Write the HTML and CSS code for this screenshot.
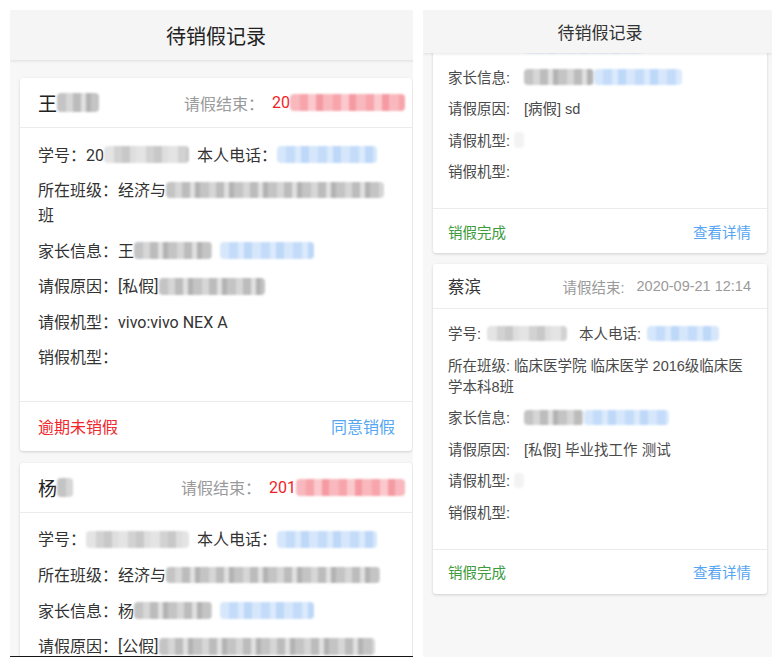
FILE: index.html
```html
<!DOCTYPE html>
<html lang="zh">
<head>
<meta charset="utf-8">
<title>待销假记录</title>
<link rel="stylesheet" href="styles.css">
</head>
<body>
<div class="stage">
  <section class="phone phone-lg">
    <div class="screen screen-lg">
      <header class="bar bar-lg">待销假记录</header>
      <div class="feed feed-lg">
        <article class="card card-lg">
          <div class="card-head">
            <span class="name">王<span class="mask gray w42"></span></span>
            <span class="end"><span class="end-label">请假结束：</span><span class="end-date">20<span class="mask pink w115"></span></span></span>
          </div>
          <div class="card-body">
            <p class="row">学号：20<span class="mask light w85 gap8"></span>本人电话：<span class="mask blue w100"></span></p>
            <p class="row">所在班级：经济与<span class="mask gray w218"></span>班</p>
            <p class="row">家长信息：王<span class="mask gray w78 gap8"></span><span class="mask blue w94"></span></p>
            <p class="row">请假原因：[私假]<span class="mask gray w106"></span></p>
            <p class="row">请假机型：vivo:vivo NEX A</p>
            <p class="row">销假机型：</p>
          </div>
          <div class="card-foot">
            <span class="status overdue">逾期未销假</span>
            <span class="action">同意销假</span>
          </div>
        </article>
        <article class="card card-lg">
          <div class="card-head">
            <span class="name">杨<span class="mask gray w16"></span></span>
            <span class="end"><span class="end-label">请假结束：</span><span class="end-date">201<span class="mask pink w109"></span></span></span>
          </div>
          <div class="card-body">
            <p class="row">学号：<span class="mask light w103 gap8"></span>本人电话：<span class="mask blue w100"></span></p>
            <p class="row">所在班级：经济与<span class="mask gray w214"></span></p>
            <p class="row">家长信息：杨<span class="mask gray w78 gap8"></span><span class="mask blue w94"></span></p>
            <p class="row">请假原因：[公假]<span class="mask gray w216"></span></p>
            <p class="row">请假机型：</p>
            <p class="row">销假机型：</p>
          </div>
        </article>
      </div>
    </div>
  </section>

  <section class="phone phone-sm">
    <div class="screen screen-sm">
      <header class="bar bar-sm">待销假记录</header>
      <div class="feed feed-sm">
        <article class="card card-sm">
          <div class="card-head">
            <span class="name">张<span class="mask gray w16"></span></span>
            <span class="end"><span class="end-label">请假结束:</span><span class="end-date">2020-09-20 18:00</span></span>
          </div>
          <div class="card-body">
            <p class="row">学号:<span class="mask light w80 gap12"></span>本人电话:<span class="mask blue w72"></span></p>
            <p class="row">所在班级:<span class="mask blue w120 gap14"></span></p>
            <p class="row">家长信息:<span class="mask gray w70 gap14 mr0"></span><span class="mask blue w88"></span></p>
            <p class="row">请假原因:<span class="val">[病假] sd</span></p>
            <p class="row">请假机型:<span class="mask faint w10 gap4"></span></p>
            <p class="row">销假机型:</p>
          </div>
          <div class="card-foot">
            <span class="status done">销假完成</span>
            <span class="action">查看详情</span>
          </div>
        </article>
        <article class="card card-sm">
          <div class="card-head">
            <span class="name">蔡滨</span>
            <span class="end"><span class="end-label">请假结束:</span><span class="end-date">2020-09-21 12:14</span></span>
          </div>
          <div class="card-body">
            <p class="row">学号:<span class="mask light w80 gap12 ml6"></span>本人电话:<span class="mask blue w72 ml6"></span></p>
            <p class="row">所在班级: 临床医学院 临床医学 2016级临床医学本科8班</p>
            <p class="row">家长信息:<span class="mask gray w60 gap14 mr0"></span><span class="mask blue w85"></span></p>
            <p class="row">请假原因:<span class="val">[私假] 毕业找工作 测试</span></p>
            <p class="row">请假机型:<span class="mask faint w10 gap4"></span></p>
            <p class="row">销假机型:</p>
          </div>
          <div class="card-foot">
            <span class="status done">销假完成</span>
            <span class="action">查看详情</span>
          </div>
        </article>
      </div>
    </div>
  </section>
</div>
</body>
</html>
```

FILE: styles.css
```css
* { box-sizing: border-box; }

html, body {
  margin: 0;
  padding: 0;
  background: #ffffff;
}

.stage {
  display: flex;
  align-items: flex-start;
  gap: 10px;
  padding: 10px;
}

.phone {
  height: 647px;
  overflow: hidden;
  background: #f7f7f7;
  flex: none;
}

.phone-lg {
  width: 403px;
  border-bottom: 1px solid #161616;
  font-family: Roboto, "Noto Sans CJK SC", sans-serif;
  color: #333;
}

.phone-sm {
  width: 349px;
  font-family: "Liberation Sans", "Noto Sans CJK SC", sans-serif;
  color: #4a4a4a;
}

.screen { display: flex; flex-direction: column; }
.screen-lg { width: 412px; }
.screen-sm { width: 354px; }

.bar {
  position: relative;
  z-index: 2;
  flex: none;
  display: flex;
  align-items: center;
  justify-content: center;
  background: #f5f5f5;
  box-shadow: 0 1px 3px rgba(0, 0, 0, 0.10);
  color: #222;
}

.bar-lg { height: 50px; font-size: 20px; }
.bar-sm { height: 43px; font-size: 17px; color: #333; }

.feed { display: flex; flex-direction: column; }
.feed-lg { padding: 18px 10px 0; gap: 12px; }
.feed-sm { padding: 0 10px; gap: 11px; margin-top: -108.5px; position: relative; z-index: 1; }

.card {
  background: #fff;
  border-radius: 3px;
  box-shadow: 0 1px 3px rgba(0, 0, 0, 0.16);
  flex: none;
}

.card-head {
  display: flex;
  align-items: center;
  justify-content: space-between;
  border-bottom: 1px solid #ececec;
  white-space: nowrap;
}

.card-lg .card-head { height: 50px; padding: 0 7px 0 18px; }
.card-sm .card-head { height: 45px; padding: 0 16px 0 15px; }

.name { display: inline-flex; align-items: center; }
.card-lg .name { font-size: 19px; color: #222; }
.card-sm .name { font-size: 16.5px; color: #333; }

.end { display: inline-flex; align-items: center; }
.end-label { color: #9a9a9a; }
.card-lg .end { font-size: 16px; }
.card-lg .end-label { margin-right: 8px; }
.card-lg .end-date { color: #f01e24; display: inline-flex; align-items: center; }
.card-sm .end { font-size: 14.5px; }
.card-sm .end-label { margin-right: 12px; }
.card-sm .end-date { color: #9a9a9a; }

.card-body { display: flex; flex-direction: column; }
.card-lg .card-body { padding: 14.5px 18px 30.5px; gap: 10.6px; font-size: 16px; }
.card-sm .card-body { padding: 15px 15px 25px; gap: 10.5px; font-size: 14.5px; }

.row { margin: 0; }
.card-lg .row { line-height: 25px; }
.card-sm .row { line-height: 21px; }

.val { margin-left: 14px; }

.card-foot {
  display: flex;
  align-items: center;
  justify-content: space-between;
  border-top: 1px solid #ececec;
}
.card-lg .card-foot { height: 50px; padding: 0 17px 0 18px; font-size: 16px; }
.card-sm .card-foot { height: 45px; padding: 0 16px 0 15px; font-size: 14.5px; }

.overdue { color: #f0262c; }
.done { color: #3d9a3d; }
.action { color: #56a5f2; }

/* privacy mosaics */
.mask {
  display: inline-block;
  height: 1.05em;
  vertical-align: -0.15em;
  border-radius: 4px;
  filter: blur(0.8px);
}
.mask.gray {
  background: repeating-linear-gradient(90deg, #c4c4c4 0 9px, #d6d6d6 9px 16px, #bcbcbc 16px 24px, #e0e0e0 24px 29px, #b3b3b3 29px 34px);
}
.mask.light {
  background: repeating-linear-gradient(90deg, #e4e4e4 0 10px, #d2d2d2 10px 18px, #c8c8c8 18px 26px, #dedede 26px 32px);
}
.mask.blue {
  background: repeating-linear-gradient(90deg, #d6e7fb 0 9px, #c4dcf9 9px 18px, #dbeafc 18px 24px, #bed8f8 24px 32px);
}
.mask.pink {
  background: repeating-linear-gradient(90deg, #f8b8bd 0 10px, #f7a4ab 10px 18px, #fbc9cd 18px 26px, #f59aa2 26px 33px);
}
.mask.faint { background: #f3f3f3; }

.w10 { width: 10px; }
.w16 { width: 16px; }
.w42 { width: 42px; }
.w60 { width: 60px; }
.w70 { width: 70px; }
.w72 { width: 72px; }
.w78 { width: 78px; }
.w80 { width: 80px; }
.w85 { width: 85px; }
.w88 { width: 88px; }
.w94 { width: 94px; }
.w100 { width: 100px; }
.w103 { width: 103px; }
.w106 { width: 106px; }
.w109 { width: 109px; }
.w115 { width: 115px; }
.w120 { width: 120px; }
.w214 { width: 214px; }
.w216 { width: 216px; }
.w218 { width: 218px; }

.gap4 { margin-left: 4px; }
.gap8 { margin-right: 8px; }
.gap12 { margin-right: 12px; }
.gap14 { margin-left: 14px; }
.ml6 { margin-left: 6px; }
.mr0 { margin-right: 0; }
```
